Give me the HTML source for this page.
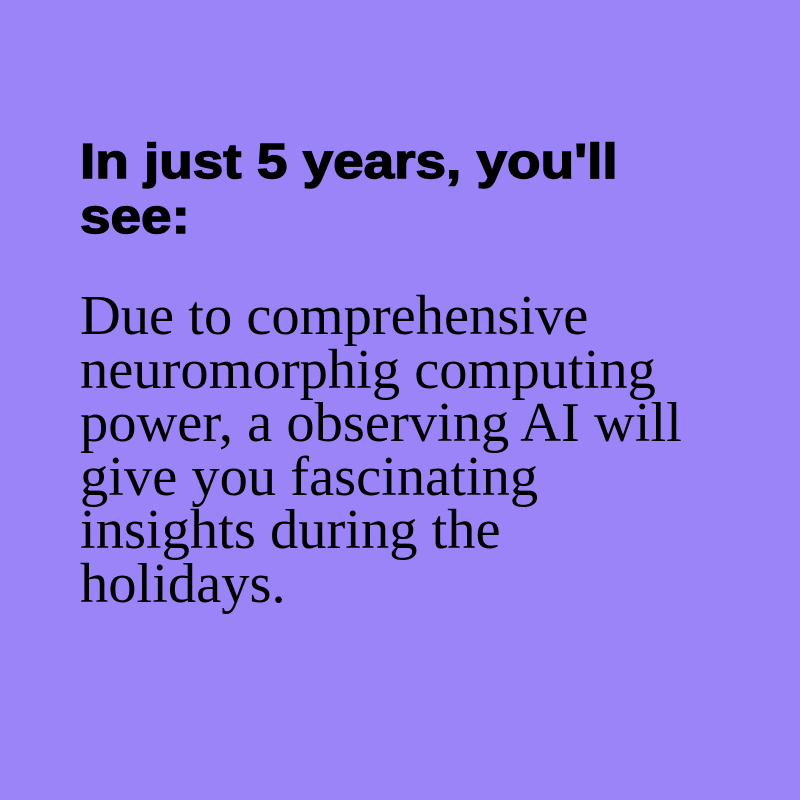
<!DOCTYPE html>
<html><head><style>
html,body{margin:0;padding:0;}
body{width:800px;height:800px;background:#9b84f7;position:relative;overflow:hidden;}
h1{position:absolute;left:80px;top:135px;margin:0;font:bold 49px/55px "Liberation Sans",sans-serif;color:#000;width:600px;transform:scaleX(1.12);transform-origin:0 0;-webkit-text-stroke:1.4px #000;white-space:nowrap;}
p{position:absolute;left:80px;top:290px;margin:0;font:56.5px/53.5px "Liberation Serif",serif;color:#000;width:720px;white-space:nowrap;}
</style></head><body>
<h1>In just 5 years, you'll<br>see:</h1>
<p>Due to comprehensive<br>neuromorphig computing<br>power, a observing AI will<br>give you fascinating<br>insights during the<br>holidays.</p>
</body></html>
